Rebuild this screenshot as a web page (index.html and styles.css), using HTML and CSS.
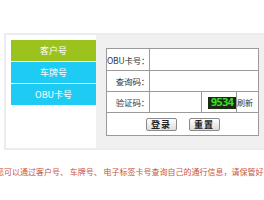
FILE: index.html
```html
<!DOCTYPE html>
<html lang="zh-CN">
<head>
<meta charset="utf-8">
<link rel="stylesheet" href="styles.css">
</head>
<body>
<div class="page">
  <div class="panel">
    <div class="tabs">
      <div class="tab tab-green">客户号</div>
      <div class="tab tab-blue">车牌号</div>
      <div class="tab tab-blue">OBU卡号</div>
    </div>
    <div class="main">
      <table class="form">
        <colgroup>
          <col class="c-lbl"><col class="c-inp"><col class="c-cap"><col class="c-ref">
        </colgroup>
        <tr class="r1">
          <td class="lbl">OBU卡号：</td>
          <td colspan="3"></td>
        </tr>
        <tr class="r2">
          <td class="lbl">查询码：</td>
          <td colspan="3"></td>
        </tr>
        <tr class="r3">
          <td class="lbl">验证码：</td>
          <td></td>
          <td class="cap"><span class="captcha">9534</span></td>
          <td class="refresh">刷新</td>
        </tr>
        <tr class="r4">
          <td colspan="4" class="btns">
            <span class="btn">登录</span><span class="btn">重置</span>
          </td>
        </tr>
      </table>
    </div>
  </div>
  <p class="note">您可以通过客户号、 车牌号、 电子标签卡号查询自己的通行信息，请保管好</p>
</div>
</body>
</html>
```

FILE: styles.css
```css
html, body {
  margin: 0;
  padding: 0;
  background: #fff;
  font-family: "Noto Sans CJK SC", "Noto Sans", sans-serif;
  overflow: hidden;
}
.page {
  padding-top: 33px;
  padding-left: 4px;
  width: 264px;
  box-sizing: border-box;
}
.panel {
  display: flex;
  border: 2px solid #ececec;
  border-right: none;
  height: 113px;
  background: #fff;
}
.tabs {
  width: 90px;
  padding: 5px 0 0 5px;
  box-sizing: border-box;
  display: flex;
  flex-direction: column;
  gap: 1px;
}
.tab {
  height: 21px;
  line-height: 21px;
  color: #fff;
  font-size: 9px;
  text-align: center;
}
.tab-green { background: #9cc31d; }
.tab-blue { background: #1ecbf2; }
.main {
  flex: 1;
  background: #f0f0f0;
  padding: 13px 0 0 10px;
}
.form {
  border-collapse: collapse;
  table-layout: fixed;
  width: 152px;
  background: #fff;
  border: 1px solid #666;
}
.c-lbl { width: 43px; }
.c-inp { width: 52px; }
.c-cap { width: 35px; }
.c-ref { width: 22px; }
.form td {
  border: 1px solid #9a9a9a;
  padding: 0;
  font-size: 9px;
  color: #333;
  white-space: nowrap;
  overflow: hidden;
}
.r1 td { height: 21px; }
.r2 td { height: 20px; }
.r3 td { height: 20px; }
.r4 td { height: 22px; }
.lbl {
  text-align: right;
  font-size: 8.5px !important;
  letter-spacing: -0.2px;
}
.cap {
  text-align: right;
}
.captcha {
  display: inline-block;
  background: #1a2a14;
  color: #3ce02c;
  font-family: "DejaVu Sans Mono", monospace;
  font-weight: bold;
  font-size: 11px;
  line-height: 12px;
  width: 28px;
  text-align: center;
  letter-spacing: -1px;
  vertical-align: middle;
}
.refresh {
  color: #888;
  font-size: 8px !important;
}
.btns {
  text-align: center;
  font-size: 0 !important;
}
.btn {
  display: inline-block;
  width: 31px;
  height: 13px;
  box-sizing: border-box;
  border: 1px solid #8a8a8a;
  border-radius: 2px;
  background: linear-gradient(#ffffff, #dcdcdc);
  font-size: 9px;
  line-height: 11px;
  font-weight: bold;
  color: #222;
  letter-spacing: 1px;
  vertical-align: middle;
  margin: 0 6px;
}
.note {
  margin: 17px 0 0 -8px;
  font-size: 8px;
  line-height: 10px;
  color: #c8553d;
  white-space: nowrap;
}
```
